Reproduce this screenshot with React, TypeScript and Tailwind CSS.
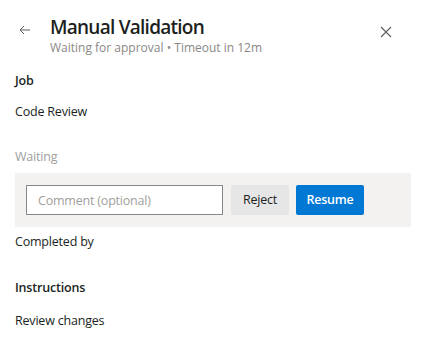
import React from "react";

export default function App() {
  return (
    <div className="w-[422px] h-[354px] bg-white text-[#201f1e]" style={{ fontFamily: '"Open Sans", "Noto Sans", sans-serif' }}>
      <div className="flex items-start pt-[14px] pl-[18px] pr-[30px]">
        <button className="w-[14px] h-[14px] mt-[9px] text-[#605e5c]">
          <svg width="14" height="14" viewBox="0 0 14 14" fill="none" stroke="currentColor" strokeWidth="1">
            <path d="M12 7H2M6 3L2 7l4 4" />
          </svg>
        </button>
        <div className="ml-[18px] flex-1">
          <div className="text-[19px] leading-[26px] font-semibold tracking-[-0.75px]">Manual Validation</div>
          <div className="text-[12px] leading-[18px] text-[#8a8886] -mt-[1px]">Waiting for approval • Timeout in 12m</div>
        </div>
        <button className="w-[12px] h-[12px] mt-[12px] text-[#605e5c]">
          <svg width="12" height="12" viewBox="0 0 12 12" fill="none" stroke="currentColor" strokeWidth="1.1">
            <path d="M1 1l10 10M11 1L1 11" />
          </svg>
        </button>
      </div>
      <div className="pl-[15px] pr-[11px] text-[12.5px] tracking-[-0.2px]">
        <div className="mt-[15px] font-semibold leading-[18px]">Job</div>
        <div className="mt-[13px] leading-[18px]">Code Review</div>
        <div className="mt-[27px] leading-[18px] text-[#a19f9d]">Waiting</div>
        <div className="mt-[7px] h-[54px] bg-[#f3f2f1] flex items-center px-[11px] gap-[8px]">
          <input
            className="w-[197px] h-[30px] border border-[#8a8886] bg-white px-[11px] text-[12.5px] tracking-[-0.2px] outline-none placeholder:text-[#a19f9d]"
            placeholder="Comment (optional)"
          />
          <button className="w-[58px] h-[30px] bg-[#e6e6e6] rounded-[2px] text-[12.5px] text-[#201f1e]">Reject</button>
          <button className="w-[68px] h-[30px] bg-[#0078d4] rounded-[2px] text-[12.5px] font-semibold text-white ml-[-1px]">Resume</button>
        </div>
        <div className="mt-[6px] leading-[18px]">Completed by</div>
        <div className="mt-[28px] font-semibold leading-[18px]">Instructions</div>
        <div className="mt-[15px] leading-[18px]">Review changes</div>
      </div>
    </div>
  );
}
